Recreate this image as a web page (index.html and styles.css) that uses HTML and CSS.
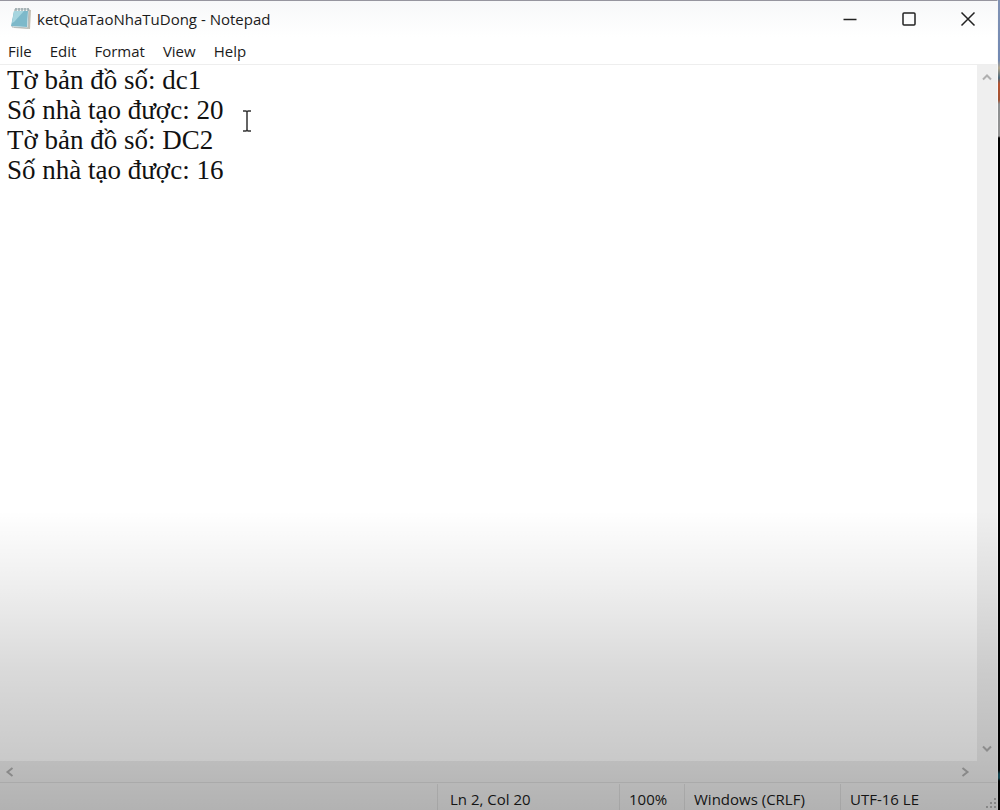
FILE: index.html
```html
<!DOCTYPE html>
<html lang="vi">
<head>
    <meta charset="UTF-8">
    <meta name="viewport" content="width=device-width, initial-scale=1.0">
    <title>ketQuaTaoNhaTuDong - Notepad</title>
    <link rel="stylesheet" href="styles.css">
</head>
<body>
    <div class="window">
        <header class="title-bar">
            <svg class="app-icon" width="22" height="24" viewBox="0 0 22 24" aria-hidden="true">
                <path d="M6 2 L21 3 L20 22 L4 21 Z" fill="#c3bfb4"/>
                <path d="M5 2 L19 2 L18 21 L2 20 Z" fill="#eef4f4" stroke="#b3bcbd" stroke-width="1"/>
                <path d="M4 4 L18 4 L17 20 L1 19 Z" fill="#7db9ca"/>
                <path d="M4 4 L14 4 L4 15 L2 16 Z" fill="#a6d5df"/>
                <path d="M6 1v3M9 1v3M12 1v3M15 1v3M18 1v3" stroke="#7d9095" stroke-width="1"/>
            </svg>
            <h1>ketQuaTaoNhaTuDong - Notepad</h1>
            <div class="window-buttons">
                <button type="button" aria-label="Minimize">
                    <svg width="16" height="16" viewBox="0 0 16 16"><path d="M1.5 8.5h13"/></svg>
                </button>
                <button type="button" aria-label="Maximize">
                    <svg width="16" height="16" viewBox="0 0 16 16"><rect x="2" y="2" width="12" height="12" rx="1"/></svg>
                </button>
                <button type="button" aria-label="Close">
                    <svg width="16" height="16" viewBox="0 0 16 16"><path d="M1.5 1.5l13 13M14.5 1.5l-13 13"/></svg>
                </button>
            </div>
        </header>

        <nav class="menu-bar">
            <button type="button">File</button>
            <button type="button">Edit</button>
            <button type="button">Format</button>
            <button type="button">View</button>
            <button type="button">Help</button>
        </nav>

        <main class="editor">
            <textarea class="text" aria-label="Text editor" spellcheck="false" wrap="off">Tờ bản đồ số: dc1
Số nhà tạo được: 20
Tờ bản đồ số: DC2
Số nhà tạo được: 16</textarea>
            <div class="scroll-v">
                <button type="button" aria-label="Scroll up">
                    <svg width="12" height="12" viewBox="0 0 12 12"><path d="M2 8.5l4-4 4 4"/></svg>
                </button>
                <button type="button" aria-label="Scroll down">
                    <svg width="12" height="12" viewBox="0 0 12 12"><path d="M2 3.5l4 4 4-4"/></svg>
                </button>
            </div>
            <div class="scroll-h">
                <button type="button" aria-label="Scroll left">
                    <svg width="12" height="12" viewBox="0 0 12 12"><path d="M8.5 2l-5 4 5 4"/></svg>
                </button>
                <button type="button" aria-label="Scroll right">
                    <svg width="12" height="12" viewBox="0 0 12 12"><path d="M3.5 2l5 4-5 4"/></svg>
                </button>
            </div>
            <svg class="text-cursor" width="10" height="22" viewBox="0 0 10 22" aria-hidden="true">
                <path d="M1 1h3l1 1 1-1h3M5 2v18M1 21h3l1-1 1 1h3"/>
            </svg>
        </main>

        <footer class="status-bar">
            <span class="position">Ln 2, Col 20</span>
            <span class="zoom">100%</span>
            <span class="line-ending">Windows (CRLF)</span>
            <span class="encoding">UTF-16 LE</span>
            <svg class="grip" width="12" height="12" viewBox="0 0 12 12" aria-hidden="true">
                <path d="M9 0h2v2h-2zM5 4h2v2h-2zM9 4h2v2h-2zM1 8h2v2h-2zM5 8h2v2h-2zM9 8h2v2h-2z"/>
            </svg>
        </footer>
    </div>
    <div class="shade"></div>
</body>
</html>
```
FILE: styles.css
```css
body {
    margin: 0;
    min-height: 100vh;
    display: flex;
    box-sizing: border-box;
    padding-right: 2px;
    /* sliver of the desktop behind the window */
    background: linear-gradient(#8193b5 0, #7188b2 60px, #b3a68d 68px, #496578 78px, #b65331 84px, #a05234 100px, #8e9091 104px, #929292 136px, #000000 138px, #000000 770px, #155361 774px, #155361 778px, #000000 781px);
    font-family: "Open Sans", "Segoe UI", sans-serif;
    color: #1b1b1b;
}

button {
    border: none;
    padding: 0;
    background: none;
    font: inherit;
    color: inherit;
}

svg {
    display: block;
    fill: none;
}

.window {
    flex: 1;
    min-width: 0;
    display: flex;
    flex-direction: column;
    box-sizing: border-box;
    border-top: 1px solid #96959f;
    border-right: 1px solid #f8f8f8;
    background-color: #ffffff;
}

.title-bar {
    display: flex;
    align-items: center;
    height: 36px;
    padding-left: 10px;
    background: linear-gradient(#f7f8f9, #ffffff);
}

.title-bar h1 {
    flex: 1;
    margin: 0 0 0 5px;
    font-size: 15px;
    font-weight: 400;
}

.window-buttons {
    display: flex;
}

.window-buttons button {
    width: 59px;
    height: 36px;
    display: flex;
    align-items: center;
    justify-content: center;
}

.window-buttons svg {
    stroke: #222222;
    stroke-width: 1.5;
}

.menu-bar {
    display: flex;
    gap: 18px;
    height: 27px;
    padding-left: 8px;
    font-size: 15px;
    border-bottom: 1px solid #eeeeee;
}

.editor {
    flex: 1;
    position: relative;
    display: grid;
    grid-template-columns: 1fr 20px;
    grid-template-rows: 1fr 21px;
    background-color: #efefef;
}

.text {
    border: none;
    outline: none;
    resize: none;
    padding: 0 7px;
    overflow: hidden;
    background-color: #ffffff;
    color: #111111;
    font-family: "Liberation Serif", "Times New Roman", serif;
    font-size: 27px;
    line-height: 30px;
}

.scroll-v,
.scroll-h {
    display: flex;
    justify-content: space-between;
    align-items: center;
}

.scroll-v {
    flex-direction: column;
    padding: 6px 0;
}

.scroll-h {
    padding: 0 6px 0 4px;
}

.scroll-v svg,
.scroll-h svg {
    stroke: #b0b0b0;
    stroke-width: 2;
}

/* mouse pointer over the text */
.text-cursor {
    position: absolute;
    left: 242px;
    top: 45px;
    stroke: #333333;
    stroke-width: 1.5;
}

.status-bar {
    display: flex;
    justify-content: flex-end;
    box-sizing: border-box;
    height: 28px;
    overflow: hidden;
    border-top: 1px solid #dddddd;
    background-color: #f0f0f0;
    font-size: 15px;
    line-height: 30px;
}

.status-bar span {
    box-sizing: border-box;
    padding-left: 9px;
    margin-top: 1px;
    border-left: 1px solid #dddddd;
    white-space: nowrap;
}

.position {
    width: 182px;
}

.status-bar .position {
    padding-left: 12px;
}

.zoom {
    width: 65px;
}

.line-ending {
    width: 156px;
}

.encoding {
    width: 145px;
}

.grip {
    align-self: flex-end;
    fill: #b5b5b5;
}

/* screen dims toward the bottom edge */
.shade {
    position: absolute;
    inset: 0;
    pointer-events: none;
    background: linear-gradient(rgba(0, 0, 0, 0) 63%, rgba(0, 0, 0, 0.07) 73%, rgba(0, 0, 0, 0.15) 83%, rgba(0, 0, 0, 0.21) 94%, rgba(0, 0, 0, 0.26) 100%);
}
```
